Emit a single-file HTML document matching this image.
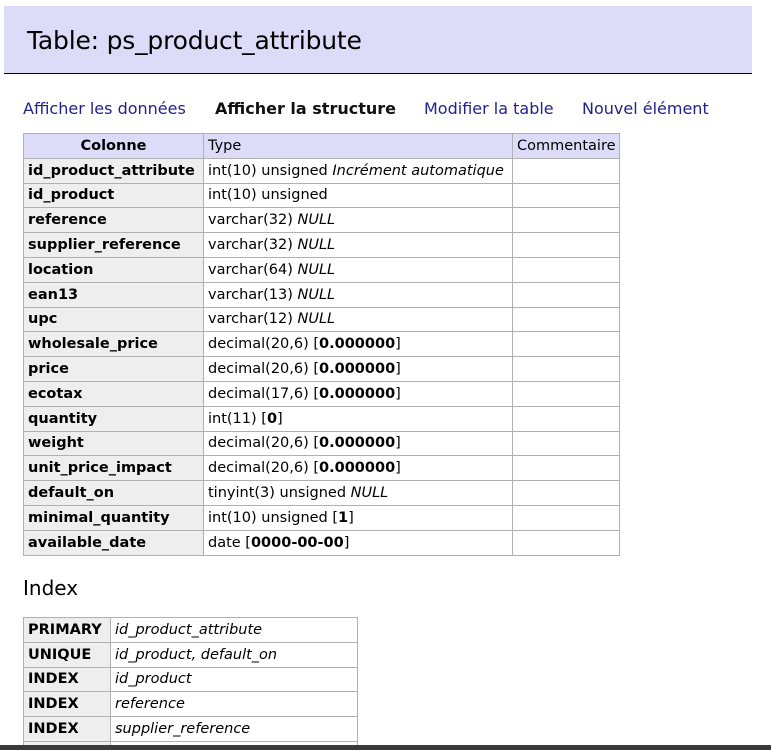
<!DOCTYPE html>
<html><head><meta charset="utf-8">
<style>
html,body{margin:0;padding:0;background:#fff;width:771px;height:750px;overflow:hidden;position:relative;font-family:"DejaVu Sans","Liberation Sans",sans-serif;color:#000}
#hd{position:absolute;left:4px;top:6px;width:748px;height:67px;background:#dcdcf8;border-bottom:1px solid #000}
#hd h2{margin:0;position:absolute;left:23px;top:20px;font-weight:normal;font-size:25px;letter-spacing:-0.2px}
#links{position:absolute;top:99px;left:23px;font-size:16px;color:#22228c;white-space:nowrap}
#links span{position:absolute;top:0}
table{position:absolute;border-collapse:collapse;font-size:14.5px;table-layout:fixed}
td,th{border:1px solid #b0b0b0;height:23.8px;padding:0 4px;white-space:nowrap;overflow:hidden;text-align:left;font-weight:normal}
th.h{background:#dcdcf8;font-weight:normal}
td.c{background:#eee;font-weight:bold}
#t1{left:23px;top:133px;width:596px}
#t1 th.h:first-child{font-weight:bold;text-align:center}
#idx{position:absolute;left:23px;top:576px;font-size:20px}
#t2{left:23px;top:617px;width:334px}
#t2 td:nth-child(2){font-style:italic}
#bar{position:absolute;left:0;top:745px;width:771px;height:5px;background:#3a3a3a}
</style></head><body>
<div id="hd"><h2>Table: ps_product_attribute</h2></div>
<div id="links">
<span style="left:0">Afficher les données</span>
<span style="left:192px;font-weight:bold;color:#111">Afficher la structure</span>
<span style="left:401px">Modifier la table</span>
<span style="left:559px">Nouvel élément</span>
</div>
<table id="t1">
<colgroup><col style="width:180px"><col style="width:309px"><col style="width:107px"></colgroup>
<tr><th class="h">Colonne</th><th class="h">Type</th><th class="h">Commentaire</th></tr>
<tr><td class="c">id_product_attribute</td><td>int(10) unsigned <i>Incrément automatique</i></td><td></td></tr>
<tr><td class="c">id_product</td><td>int(10) unsigned</td><td></td></tr>
<tr><td class="c">reference</td><td>varchar(32) <i>NULL</i></td><td></td></tr>
<tr><td class="c">supplier_reference</td><td>varchar(32) <i>NULL</i></td><td></td></tr>
<tr><td class="c">location</td><td>varchar(64) <i>NULL</i></td><td></td></tr>
<tr><td class="c">ean13</td><td>varchar(13) <i>NULL</i></td><td></td></tr>
<tr><td class="c">upc</td><td>varchar(12) <i>NULL</i></td><td></td></tr>
<tr><td class="c">wholesale_price</td><td>decimal(20,6) [<b>0.000000</b>]</td><td></td></tr>
<tr><td class="c">price</td><td>decimal(20,6) [<b>0.000000</b>]</td><td></td></tr>
<tr><td class="c">ecotax</td><td>decimal(17,6) [<b>0.000000</b>]</td><td></td></tr>
<tr><td class="c">quantity</td><td>int(11) [<b>0</b>]</td><td></td></tr>
<tr><td class="c">weight</td><td>decimal(20,6) [<b>0.000000</b>]</td><td></td></tr>
<tr><td class="c">unit_price_impact</td><td>decimal(20,6) [<b>0.000000</b>]</td><td></td></tr>
<tr><td class="c">default_on</td><td>tinyint(3) unsigned <i>NULL</i></td><td></td></tr>
<tr><td class="c">minimal_quantity</td><td>int(10) unsigned [<b>1</b>]</td><td></td></tr>
<tr><td class="c">available_date</td><td>date [<b>0000-00-00</b>]</td><td></td></tr>
</table>
<div id="idx">Index</div>
<table id="t2">
<colgroup><col style="width:87px"><col style="width:247px"></colgroup>
<tr><td class="c">PRIMARY</td><td>id_product_attribute</td></tr>
<tr><td class="c">UNIQUE</td><td>id_product, default_on</td></tr>
<tr><td class="c">INDEX</td><td>id_product</td></tr>
<tr><td class="c">INDEX</td><td>reference</td></tr>
<tr><td class="c">INDEX</td><td>supplier_reference</td></tr>
<tr><td class="c">INDEX</td><td>id_product, supplier_reference</td></tr>
</table>
<div id="bar"></div>
</body></html>
